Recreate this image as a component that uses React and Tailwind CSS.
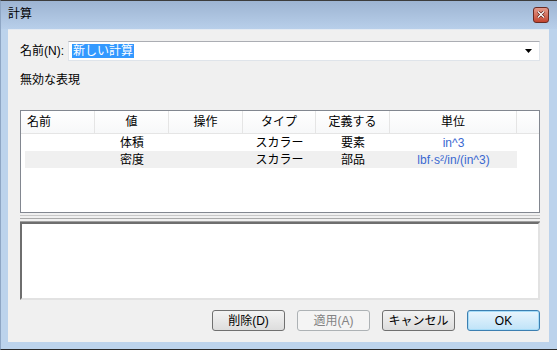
import React from 'react';

const font = { fontFamily: '"Liberation Sans", "Noto Sans CJK JP", sans-serif' };

const cols = ['名前', '値', '操作', 'タイプ', '定義する', '単位'];

const rows = [
  { value: '体積', type: 'スカラー', def: '要素', unit: 'in^3', alt: false },
  { value: '密度', type: 'スカラー', def: '部品', unit: 'lbf·s²/in/(in^3)', alt: true },
];

const Button = ({ children, disabled, primary }) => {
  let cls = 'border-[#707070] bg-gradient-to-b from-[#f3f3f3] to-[#dddddd] text-black';
  if (disabled) cls = 'border-[#adb2b5] bg-[#f4f4f4] text-[#838383]';
  if (primary) cls = 'border-[#3c7fb1] bg-gradient-to-b from-[#e9f5fd] to-[#bfe3f8] text-black shadow-[inset_0_0_0_1px_#a6dcf8]';
  return (
    <div className={`w-[73px] h-[21px] rounded-[3px] border flex items-center justify-center text-[12px] leading-none ${cls}`}>
      {children}
    </div>
  );
};

export default function App() {
  return (
    <div className="w-[557px] h-[352px] bg-white overflow-hidden" style={font}>
      <div className="h-[350px] flex flex-col bg-[#bcd3ec] border-t border-[#3c3c3c] border-l border-l-[#8ea6c4] border-b border-b-[#2a2a2a]">
        {/* タイトルバー */}
        <div className="h-[28px] shrink-0 flex items-center justify-between pl-[7px] pr-[8px] bg-gradient-to-b from-[#9db4d2] to-[#b8cfea]">
          <span className="text-[12px] leading-none text-black pb-[2px]">計算</span>
          <div className="w-[16px] h-[16px] rounded-[3px] border border-[#6a2a22] bg-gradient-to-b from-[#e39a8c] to-[#c2432e] flex items-center justify-center mb-[1px]">
            <svg width="8" height="7" viewBox="0 0 8 7">
              <path d="M1 0.5 L7 6.5 M7 0.5 L1 6.5" stroke="#5a1a12" strokeWidth="2.6" />
              <path d="M1 0.5 L7 6.5 M7 0.5 L1 6.5" stroke="#ffffff" strokeWidth="1.4" />
            </svg>
          </div>
        </div>

        {/* 本体 */}
        <div className="flex-1 ml-[7px] mr-[8px] mb-[7px] bg-[#f0f0f0] flex flex-col pl-[12px] pr-[9px] pt-[11px] pb-[11px] border-t border-[#e4eaf2]">
          <div className="flex items-center h-[20px]">
            <span className="w-[48px] text-[12px] leading-none text-black">名前(N):</span>
            <div className="flex-1 h-[20px] bg-white border border-[#dfe4ea] border-t-[#abadb3] flex items-center pl-[3px] pr-[6px]">
              <span className="bg-[#3399ff] text-white text-[12px] leading-[14px] px-[1px]">新しい計算</span>
              <div className="flex-1" />
              <svg width="8" height="4" viewBox="0 0 8 4">
                <path d="M0 0 H7 L3.5 4 Z" fill="#000" />
              </svg>
            </div>
          </div>

          <div className="mt-[11px] h-[16px] flex items-center text-[12px] leading-none text-black">無効な表現</div>

          {/* テーブル */}
          <div className="mt-[22px] h-[103px] bg-white border border-[#828790] flex flex-col">
            <div className="h-[23px] grid grid-cols-[74px_74px_74px_73px_74px_127px_1fr] bg-gradient-to-b from-white to-[#f7f8f9] border-b border-[#e5e5e5]">
              {cols.map((c, i) => (
                <div
                  key={c}
                  className={`flex items-center text-[12px] leading-none text-black border-r border-[#e5e5e5] ${i === 0 ? 'pl-[6px]' : 'justify-center'}`}
                >
                  {c}
                </div>
              ))}
              <div />
            </div>
            {rows.map(r => (
              <div
                key={r.value}
                className={`ml-[4px] w-[492px] h-[17px] grid grid-cols-[70px_74px_74px_73px_74px_127px] text-[12px] leading-none ${r.alt ? 'bg-[#f0f0f0]' : ''}`}
              >
                <div />
                <div className="flex items-center justify-center text-black">{r.value}</div>
                <div />
                <div className="flex items-center justify-center text-black">{r.type}</div>
                <div className="flex items-center justify-center text-black">{r.def}</div>
                <div className="flex items-center justify-center text-[#3a68d0]">{r.unit}</div>
              </div>
            ))}
          </div>

          {/* 分割バー */}
          <div className="h-[9px] flex flex-col pt-[2px] gap-[2px]">
            <div className="h-px bg-[#c8c8c8]" />
            <div className="h-px bg-[#a9a9a9]" />
            <div className="h-px bg-[#a0a0a0]" />
          </div>

          {/* テキストエリア */}
          <div className="h-[78px] bg-white border-2 border-t-[#6e6e6e] border-l-[#6e6e6e] border-r-[#e2e2e2] border-b-[#e2e2e2]" />

          <div className="flex-1" />

          {/* ボタン */}
          <div className="flex justify-end gap-[12px]">
            <Button>削除(D)</Button>
            <Button disabled>適用(A)</Button>
            <Button>キャンセル</Button>
            <Button primary>OK</Button>
          </div>
        </div>
      </div>
    </div>
  );
}
